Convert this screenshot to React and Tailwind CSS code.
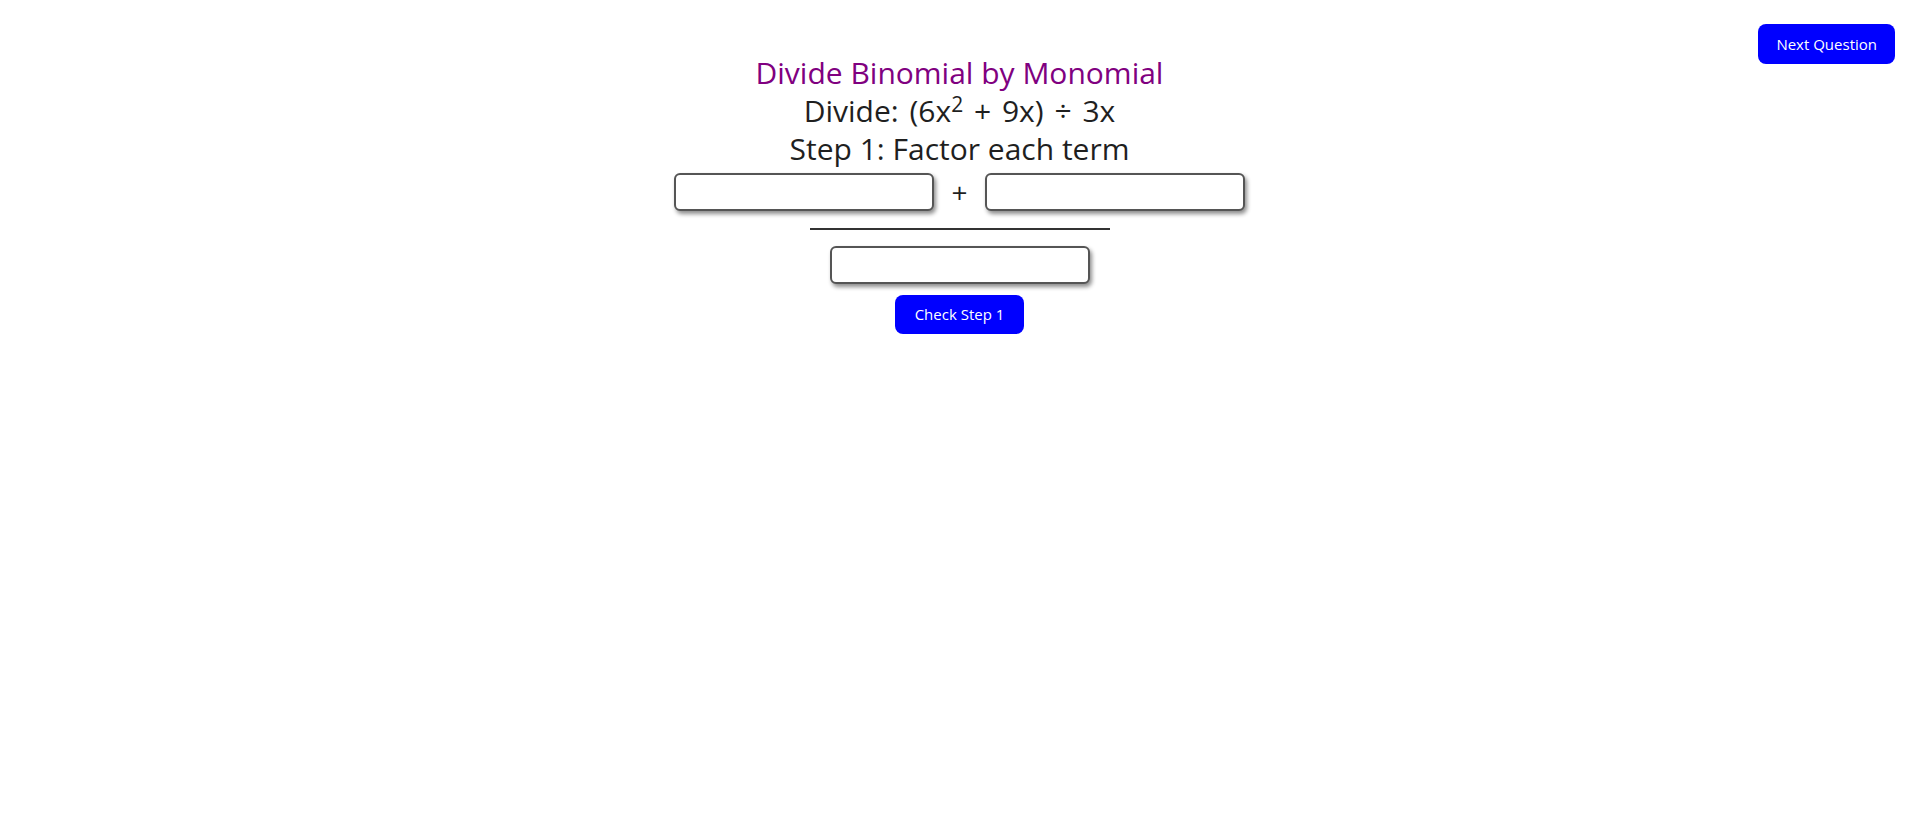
import React from "react";

export default function App() {
  const inputCls =
    "w-[260px] h-[38px] rounded-[6px] border-2 border-[#555555] bg-white shadow-[2px_3px_4px_rgba(0,0,0,0.45)] outline-none px-2 text-[18px]";
  return (
    <div className="relative min-h-screen w-full bg-white font-['Open_Sans',sans-serif]">
      <button className="absolute top-[24px] right-[24px] h-[40px] px-[18px] rounded-[8px] bg-[#0000ff] text-white text-[15px]">
        Next Question
      </button>
      <div className="flex flex-col items-center pt-[54px]">
        <h2 className="text-[30px] leading-[38px] text-[#800080]">
          Divide Binomial by Monomial
        </h2>
        <div className="text-[30px] leading-[38px] text-[#1f1f1f] [word-spacing:3px]">
          Divide: (6x<sup className="text-[0.7em]">2</sup> + 9x) ÷ 3x
        </div>
        <div className="text-[30px] leading-[38px] text-[#1f1f1f]">
          Step 1: Factor each term
        </div>
        <div className="mt-[5px] flex items-center">
          <input className={inputCls} />
          <span className="w-[51px] text-center text-[28px] leading-none text-[#1f1f1f]">+</span>
          <input className={inputCls} />
        </div>
        <div className="mt-[17px] h-[2px] w-[300px] bg-[#333333]" />
        <input className={"mt-[16px] " + inputCls} />
        <button className="mt-[11px] h-[39px] px-[20px] rounded-[8px] bg-[#0000ff] text-white text-[15px]">
          Check Step 1
        </button>
      </div>
    </div>
  );
}
